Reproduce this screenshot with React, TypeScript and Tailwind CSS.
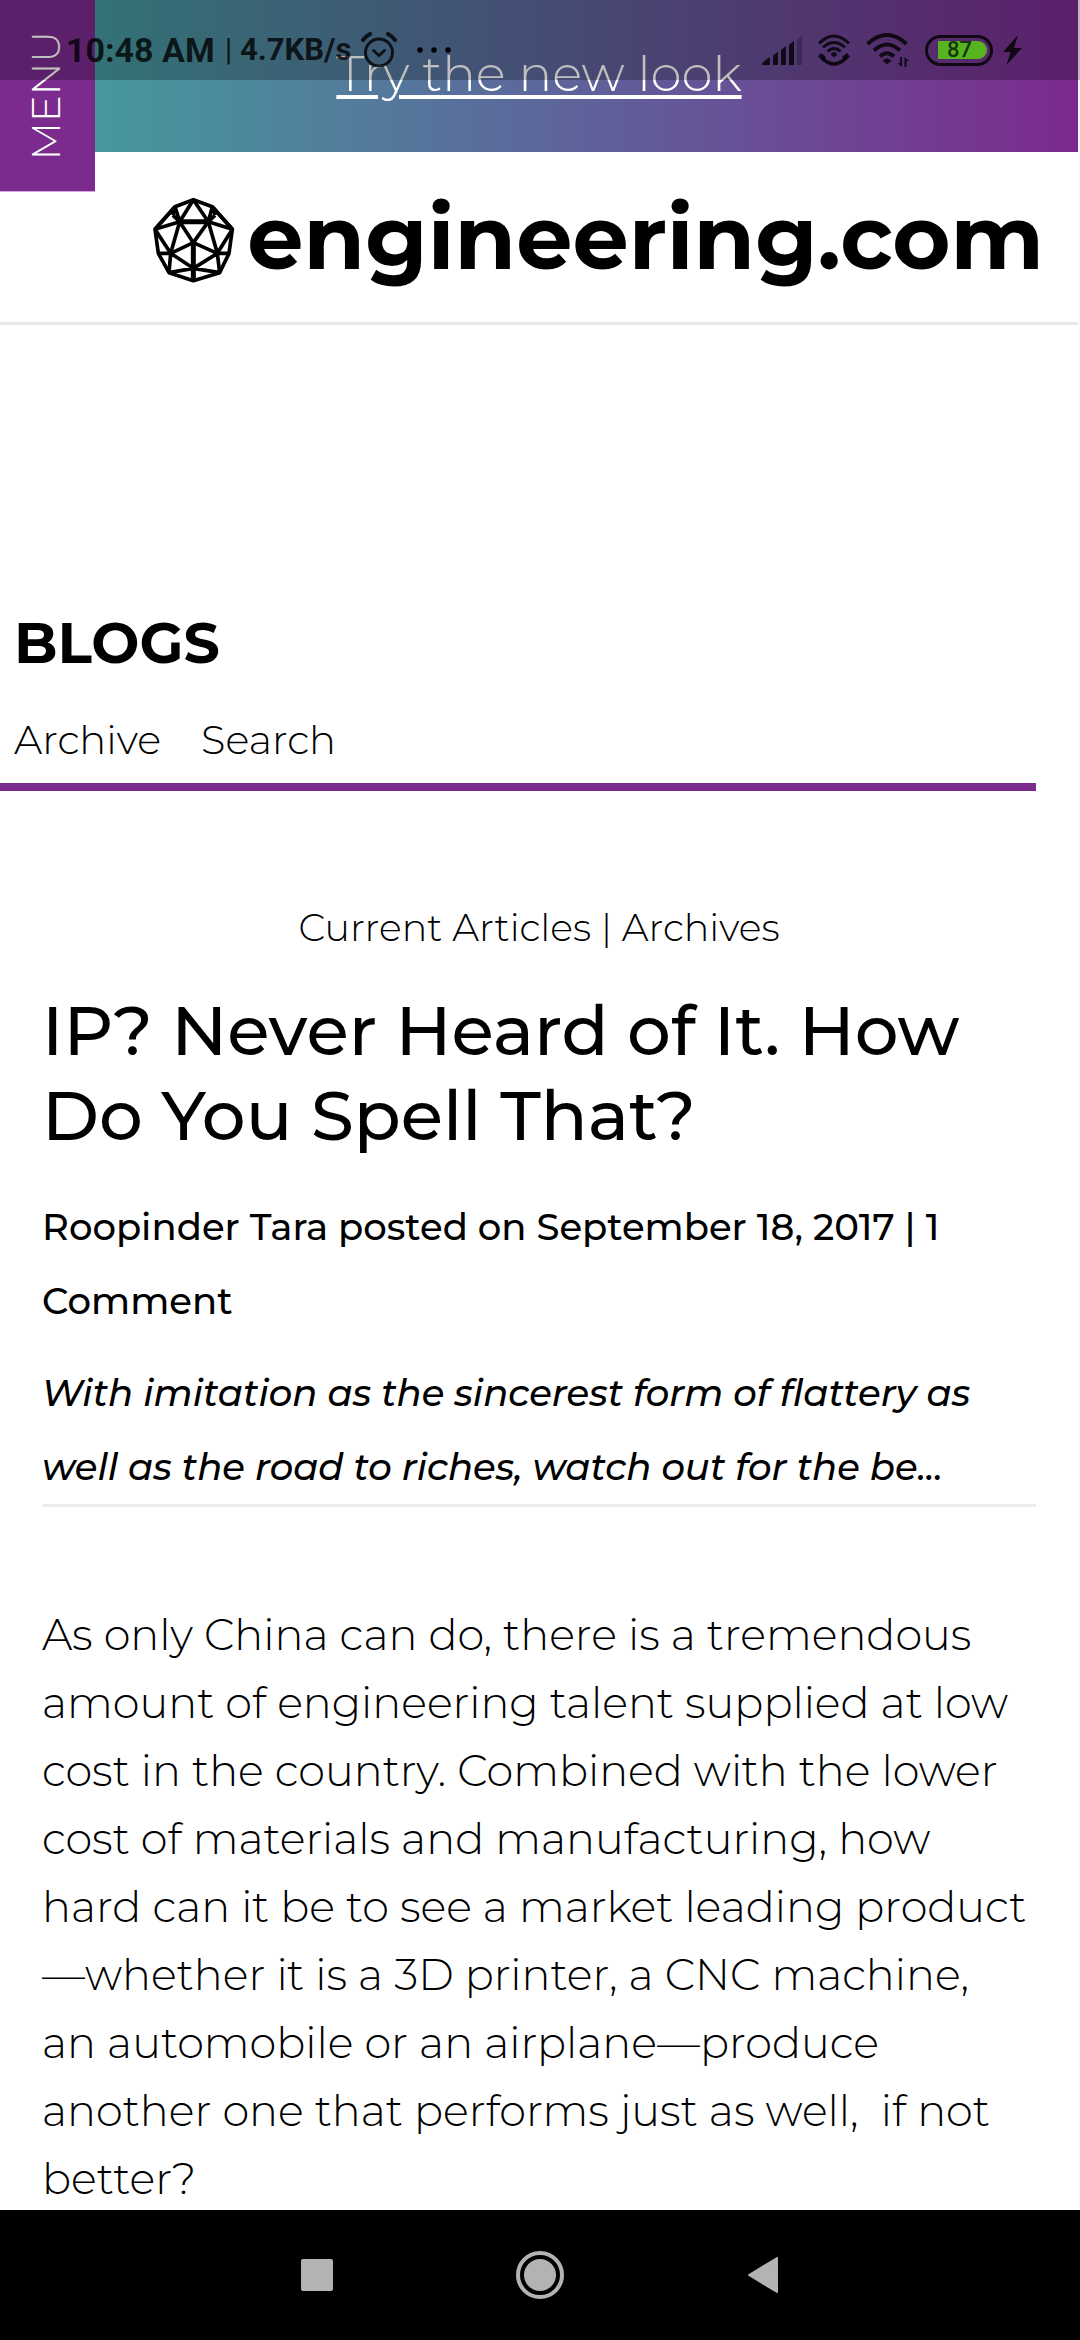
import React from "react";

function SignalIcon() {
  return (
    <svg viewBox="0 0 40 29" className="h-[29px] w-[40px]" fill="currentColor" aria-hidden="true">
      <path d="M0 29v-2l7-5.500h1V29zM11 29V19.500l4.500-3.500h.500v13zM19 29V14l4.500-3.500h.500V29zM27 29V9l4.500-4h.500v24z" />
      <path d="M35 29V3.500L39.500 0h.500v29z" opacity=".3" />
    </svg>
  );
}

function WifiCallIcon() {
  return (
    <svg viewBox="0 0 32 32" className="h-[32px] w-[32px]" fill="none" stroke="currentColor" strokeWidth="3" aria-hidden="true">
      <path d="M1 9.500Q16-5.500 31 9.500M5 13.500q11-10 22 0M9.500 17.500q6.500-6 13 0" />
      <path d="M16 17.500l3.500 3-3.500 3-3.500-3z" fill="currentColor" stroke="none" />
      <path d="M4 24q12 12 24 0" strokeWidth="3.500" />
      <path d="M0 22.500l3-3.500 5 4-3 4zM32 22.500l-3-3.500-5 4 3 4z" fill="currentColor" stroke="none" />
    </svg>
  );
}

function WifiIcon() {
  return (
    <svg viewBox="0 0 43 34" className="h-[34px] w-[43px]" fill="none" stroke="currentColor" strokeWidth="4" aria-hidden="true">
      <path d="M1.500 11Q21-7 40.500 11M8 17.500q13-12 26 0M14 23.500q7-6.500 14 0" />
      <path d="M21 25l4.500 2.500-4.500 4-4.500-4z" fill="currentColor" stroke="none" />
      <path d="M36 24v10l-4.500-4H34v-6zM38.500 34V24l4.500 4h-2.500v6z" fill="currentColor" stroke="none" />
    </svg>
  );
}

function SystemBar() {
  return (
    <div className="pointer-events-none absolute inset-x-0 top-0 z-20 flex h-20 items-center justify-between bg-black/25 pt-5 pr-[58px] pl-[66px] font-['Roboto',sans-serif] text-black/80">
      <div className="flex items-center">
        <span className="text-[34px] leading-[40px] font-bold whitespace-nowrap">10:48 AM</span>
        <span className="ml-[10px] text-[31px] leading-[40px] font-bold whitespace-nowrap">
          <span className="font-normal">|</span> 4.7KB/s
        </span>
        <svg viewBox="0 0 36 36" className="ml-[10px] size-[36px]" fill="none" stroke="currentColor" strokeWidth="3" strokeLinecap="round" aria-hidden="true">
          <circle cx="18" cy="20.500" r="13.500" />
          <path d="M12.500 18.500l5.500 5 5.500-5" />
          <path d="M2 8q3-4 7-6M34 8q-3-4-7-6" strokeWidth="4" />
        </svg>
        <svg viewBox="0 0 36 6" className="ml-[20px] h-[6px] w-[36px]" fill="#000" aria-hidden="true">
          <circle cx="3" cy="3" r="2.700" />
          <circle cx="17" cy="3" r="2.700" />
          <circle cx="31" cy="3" r="2.700" />
        </svg>
      </div>
      <div className="flex items-center">
        <SignalIcon />
        <span className="ml-4 flex"><WifiCallIcon /></span>
        <span className="ml-4 flex"><WifiIcon /></span>
        <span className="ml-4 flex h-[31px] w-[68px] items-center justify-end rounded-full border-[3px] border-black/80 pr-[3px]">
          <span className="flex h-[18px] w-[49px] items-center rounded-l-[2px] rounded-r-full bg-[#56b51e] pl-[9px] text-[22px] leading-[18px] font-medium text-[#17350a]">87</span>
        </span>
        <svg viewBox="0 0 19 30" className="ml-[10px] h-[30px] w-[19px]" fill="currentColor" aria-hidden="true">
          <path d="M15 0L0 17h7.500L3.500 30 19 13h-8z" />
        </svg>
      </div>
    </div>
  );
}

function GlobeMark() {
  return (
    <svg viewBox="12 22 246 256" className="mt-[6px] h-[86px] w-[82px] shrink-0" fill="none" stroke="#000" strokeWidth="11" strokeLinejoin="round" aria-hidden="true">
      <path d="M133 29L78 50 18 118l10 72 32 58 73 24 79-24 28-58 10-72-60-68z" />
      <path d="M78 50L18 118M72 76l20 19M190 50l60 68M198 76l-20 19M78 50l-6 26M190 50l8 26" />
      <path d="M133 29L92 95 78 50M133 29l45 66 12-45M18 118l74-23M250 118l-72-23" />
      <path d="M92 95l41 63 45-63M92 95L65 190M178 95l27 95M18 118l47 72M250 118l-45 72" />
      <path d="M133 158L65 190l68 45 72-45zM28 190h37l-5 58M240 190h-35l7 58M60 248l73-13 79 13" />
      <path d="M92 95h86M133 158v114" strokeWidth="15" />
    </svg>
  );
}

function NavButton({ label, children }: { label: string; children: React.ReactNode }) {
  return (
    <button type="button" aria-label={label} className="flex size-16 items-center justify-center">
      {children}
    </button>
  );
}

export default function App() {
  return (
    <div className="relative flex h-screen flex-col overflow-hidden bg-white font-['Montserrat','Inter',sans-serif] text-black">
      <SystemBar />

      <button type="button" className="absolute top-0 left-0 z-10 flex h-[192px] w-[95px] items-center justify-center border-b border-[#dba6e6] bg-[#7b2a8e] pr-[4px] text-white">
        <span className="rotate-180 text-[40px] leading-[52px] font-light [writing-mode:vertical-rl]">MENU</span>
      </button>

      <div className="flex min-h-0 flex-1 flex-col overflow-hidden border-r-2 border-[#fafafa]">
        <header className="shrink-0">
          <div className="flex h-[152px] justify-center bg-linear-to-r/srgb from-[#40a39d] via-[#5c679b] to-[#7b2a8e] pt-11">
            <a href="#new-look" className="text-[50px] leading-[60px] font-light text-white underline decoration-[4px] underline-offset-[4px]">
              Try the new look
            </a>
          </div>
          <a href="#home" className="flex h-[173px] items-center justify-end gap-3 border-b-[3px] border-[#e8e8e8] pr-[34px]">
            <GlobeMark />
            <span className="text-[89px] leading-[100px] font-bold whitespace-nowrap">engineering.com</span>
          </a>
        </header>

        <main className="pt-[282px]">
          <section className="mr-[42px] border-b-8 border-[#7b2a8e] pb-[13px] pl-[14px]">
            <h1 className="text-[57px] leading-[72px] font-bold">BLOGS</h1>
            <nav className="mt-[31px] flex gap-10 text-[40px] leading-[60px] font-light">
              <a href="#archive">Archive</a>
              <a href="#search">Search</a>
            </nav>
          </section>

          <p className="mt-[107px] text-center text-[38px] leading-[60px] font-light">
            <a href="#current">Current Articles</a> | <a href="#archives">Archives</a>
          </p>

          <article className="mr-[42px] ml-[42px]">
            <h2 className="mt-[30px] text-[69px] leading-[85px] font-medium">
              IP? Never Heard of It. How Do You Spell That?
            </h2>
            <p className="mt-8 text-[37px] leading-[74px] font-medium">
              Roopinder Tara posted on September 18, 2017 | 1 Comment
            </p>
            <p className="mt-[18px] border-b-[3px] border-[#ededed] text-[37px] leading-[74px] font-medium italic">
              With imitation as the sincerest form of flattery as well as the road to riches, watch out for the be...
            </p>
            <p className="mt-[94px] text-[43px] leading-[68px] font-light">
              As only China can do, there is a tremendous amount of engineering talent supplied at low
              cost in the country. Combined with the lower cost of materials and manufacturing, how
              <br />
              hard can it be to see a market leading product —whether it is a 3D printer, a CNC machine,
              <br />
              an automobile or an airplane—produce another one that performs just as well,&nbsp; if not
              better?
            </p>
          </article>
        </main>
      </div>

      <nav className="flex h-[130px] shrink-0 items-center justify-center gap-[159px] bg-black">
        <NavButton label="Recent apps">
          <span className="size-8 rounded-[2px] bg-[#b3b3b3]" />
        </NavButton>
        <NavButton label="Home">
          <svg viewBox="0 0 48 48" className="size-12" aria-hidden="true">
            <circle cx="24" cy="24" r="22" fill="none" stroke="#b3b3b3" strokeWidth="4" />
            <circle cx="24" cy="24" r="16" fill="#b3b3b3" />
          </svg>
        </NavButton>
        <NavButton label="Back">
          <svg viewBox="0 0 30 36" className="h-[36px] w-[30px]" fill="#b3b3b3" stroke="#b3b3b3" strokeWidth="2" strokeLinejoin="round" aria-hidden="true">
            <path d="M1 18L29 1v34z" />
          </svg>
        </NavButton>
      </nav>
    </div>
  );
}
